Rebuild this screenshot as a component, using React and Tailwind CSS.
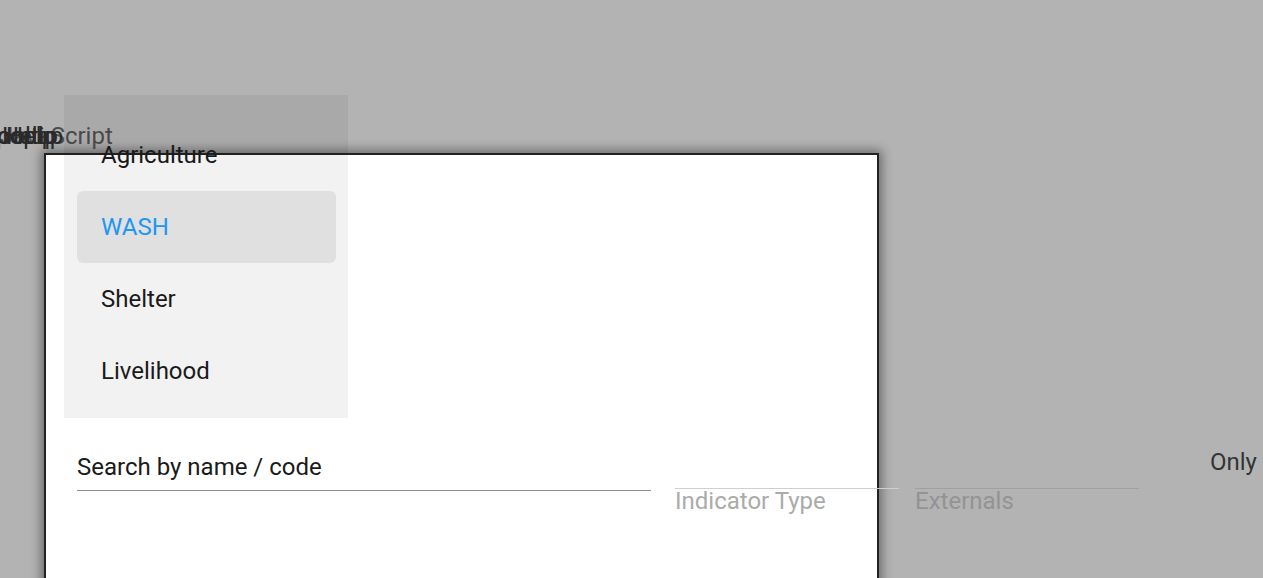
import React from 'react';

const categories = ['Agriculture', 'WASH', 'Shelter', 'Livelihood'];

function CategoryMenu({ selected }) {
  return (
    <ul className="absolute left-[64px] top-[95px] z-20 w-[284px] h-[323px] bg-black/5 px-[13px] pt-[24px] pr-[12px]">
      {categories.map((c) => (
        <li
          key={c}
          className={
            c === selected
              ? 'h-[72px] flex items-center pl-[24px] rounded-[6px] bg-[#e0e0e0] text-[#2196f3]'
              : 'h-[72px] flex items-center pl-[24px] text-[#1a1a1a]'
          }
        >
          {c}
        </li>
      ))}
    </ul>
  );
}

export default function App() {
  return (
    <div
      className="relative h-[578px] overflow-hidden bg-[#b3b3b3] pt-[153px] pl-[44px] text-[24px] leading-[32px]"
      style={{ fontFamily: 'Roboto, "Noto Sans", sans-serif' }}
    >
      {/* leftover labels stacked on top of each other */}
      <div className="absolute left-0 top-[120px] z-10">
        <span className="absolute left-0 top-0 whitespace-nowrap text-[#4d4d4d]">JavaScript</span>
        <span className="absolute left-[-10px] top-0 whitespace-nowrap text-[#2a2a2a]">tooltip</span>
        <span className="absolute left-[2px] top-0 whitespace-nowrap text-[#2a2a2a]">Hello</span>
        <span className="absolute left-[-4px] top-0 whitespace-nowrap text-[#2a2a2a]">popup</span>
        <span className="absolute left-[6px] top-0 whitespace-nowrap text-[#2a2a2a]">Help</span>
      </div>

      <CategoryMenu selected="WASH" />

      <div className="w-[835px] h-[500px] bg-white border-2 border-[#222] shadow-[0_0_10px_3px_rgba(0,0,0,0.4)] pt-[296px] pl-[31px]">
        <div className="flex items-start w-max">
          <div className="shrink-0 w-[574px] h-[40px] border-b border-[#8f8f8f] text-[#1a1a1a] whitespace-nowrap">
            Search by name / code
          </div>
          <div className="shrink-0 ml-[24px] w-[224px] flex flex-col">
            <div className="h-[38px] border-b border-[#cfcfcf]" />
            <div className="-mt-[4px] text-[#ababab] whitespace-nowrap">Indicator Type</div>
          </div>
          <div className="shrink-0 ml-[16px] w-[224px] flex flex-col">
            <div className="h-[38px] border-b border-[#a0a0a0]" />
            <div className="-mt-[4px] text-[#939393] whitespace-nowrap">Externals</div>
          </div>
          <div className="shrink-0 ml-[71px] -mt-[5px] text-[#333] whitespace-nowrap">Only</div>
        </div>
      </div>
    </div>
  );
}
